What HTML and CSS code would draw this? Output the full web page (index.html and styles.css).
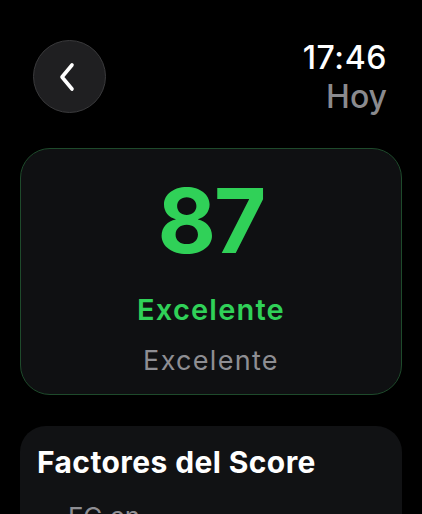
FILE: index.html
```html
<!DOCTYPE html>
<html lang="es">
<head>
    <meta charset="UTF-8">
    <title>Score</title>
    <link rel="stylesheet" href="styles.css">
</head>
<body>

<div class="screen">
    <header class="top-bar">
        <button class="back-btn" aria-label="Atrás">
            <svg width="22" height="30" viewBox="0 0 22 30">
                <path d="M15 3 L5 15 L15 27" fill="none" stroke="#fff" stroke-width="3.6" stroke-linecap="round" stroke-linejoin="round"/>
            </svg>
        </button>
        <div class="clock">
            <div class="time">17:46</div>
            <div class="day">Hoy</div>
        </div>
    </header>

    <section class="score-card">
        <div class="score">87</div>
        <div class="score-label">Excelente</div>
        <div class="score-sub">Excelente</div>
    </section>

    <section class="factors-card">
        <h2>Factores del Score</h2>
        <div class="factor">FC en</div>
    </section>
</div>

</body>
</html>
```

FILE: styles.css
```css
body {
    margin: 0;
    padding: 0;
    background-color: #000;
    font-family: Inter, "Noto Sans", sans-serif;
    color: #fff;
    overflow: hidden;
}
.screen {
    height: 514px;
    overflow: hidden;
    padding: 0 20px;
}
.top-bar {
    display: flex;
    justify-content: space-between;
    align-items: flex-start;
    height: 76px;
    padding: 40px 15px 0 13px;
}
.back-btn {
    width: 73px;
    height: 73px;
    border-radius: 50%;
    background-color: #1f1f21;
    border: 1.5px solid #3a3a3c;
    display: flex;
    align-items: center;
    justify-content: center;
    padding: 0 4px 0 0;
    cursor: pointer;
}
.clock {
    text-align: right;
}
.time {
    font-size: 32px;
    font-weight: 500;
    letter-spacing: 0.6px;
    line-height: 34px;
    margin-top: 1px;
}
.day {
    font-size: 32px;
    font-weight: 500;
    color: #8a8a8e;
    line-height: 38px;
    margin-top: 3px;
}
.score-card {
    margin-top: 32px;
    height: 245px;
    background-color: #0f1012;
    border: 1.5px solid #1e4a2b;
    border-radius: 30px;
    display: flex;
    flex-direction: column;
    align-items: center;
}
.score {
    font-size: 90px;
    font-weight: 700;
    color: #30d158;
    line-height: 90px;
    margin-top: 27px;
    letter-spacing: -2px;
}
.score-label {
    font-size: 29px;
    font-weight: 600;
    color: #30d158;
    letter-spacing: 1.2px;
    margin-top: 26px;
    line-height: 36px;
}
.score-sub {
    font-size: 27px;
    color: #8e8e93;
    letter-spacing: 1.3px;
    margin-top: 16px;
    line-height: 34px;
}
.factors-card {
    margin-top: 31px;
    height: 140px;
    background-color: #111214;
    border-radius: 26px;
    padding: 17px 17px;
}
.factors-card h2 {
    margin: 0;
    font-size: 30px;
    font-weight: 700;
    letter-spacing: 0.4px;
    line-height: 38px;
}
.factor {
    font-size: 26px;
    color: #8e8e93;
    margin-top: 20px;
    padding-left: 31px;
}
```
